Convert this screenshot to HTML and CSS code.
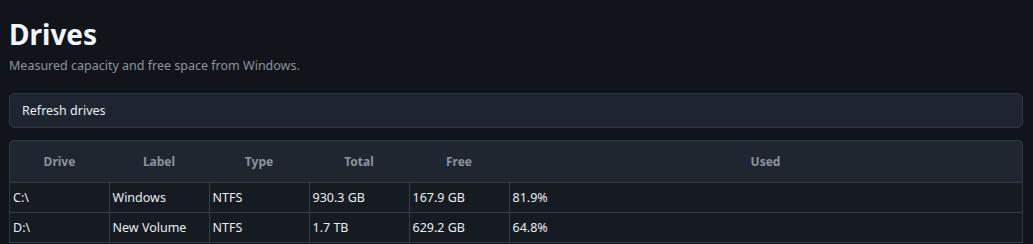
FILE: index.html
```html
<!DOCTYPE html>
<html lang="en">
  <head>
    <meta charset="UTF-8" />
    <meta name="viewport" content="width=device-width, initial-scale=1.0" />
    <title>Drives</title>
    <link rel="stylesheet" href="styles.css">
  </head>

  <body>
    <main>
      <h1>Drives</h1>
      <p class="subtitle">Measured capacity and free space from Windows.</p>

      <button class="refresh">Refresh drives</button>

      <div class="table-wrap">
        <table>
          <thead>
            <tr>
              <th class="col-small first">Drive</th>
              <th class="col-small">Label</th>
              <th class="col-small">Type</th>
              <th class="col-small">Total</th>
              <th class="col-small">Free</th>
              <th>Used</th>
            </tr>
          </thead>
          <tbody>
            <tr>
              <td>C:\</td>
              <td>Windows</td>
              <td>NTFS</td>
              <td>930.3 GB</td>
              <td>167.9 GB</td>
              <td>81.9%</td>
            </tr>
            <tr>
              <td>D:\</td>
              <td>New Volume</td>
              <td>NTFS</td>
              <td>1.7 TB</td>
              <td>629.2 GB</td>
              <td>64.8%</td>
            </tr>
          </tbody>
        </table>
      </div>
    </main>
  </body>
</html>
```

FILE: styles.css
```css
body {
  background-color: #11151b;
  color: #e6edf3;
  font-family: "Noto Sans", "Open Sans", sans-serif;
  margin: 0;
}

main {
  padding: 0 10px 0 9px;
}

h1 {
  font-size: 28px;
  font-weight: 700;
  margin: 0;
  padding-top: 15px;
  line-height: 38px;
  color: #f0f6fc;
}

.subtitle {
  font-size: 12.5px;
  color: #8b949e;
  margin: 4px 0 0;
  line-height: 18px;
}

.refresh {
  display: block;
  width: 100%;
  box-sizing: border-box;
  margin-top: 18px;
  height: 35px;
  padding: 0 12px;
  text-align: left;
  font-family: inherit;
  font-size: 12.5px;
  color: #e6edf3;
  background-color: #1e2530;
  border: 1px solid #2f3742;
  border-radius: 5px;
}

.table-wrap {
  margin-top: 12px;
  background-color: #1f2630;
  border: 1px solid #2f3742;
  border-bottom: none;
  border-radius: 5px 5px 0 0;
  overflow: hidden;
}

table {
  width: 100%;
  border-collapse: collapse;
  font-size: 12.5px;
}

th {
  height: 41px;
  color: #8b949e;
  font-weight: 700;
  font-size: 12px;
  text-align: center;
  padding: 0;
  border-bottom: 1px solid #343c47;
}

th.col-small {
  width: 100px;
}

th.first {
  width: 99px;
}

td {
  height: 29px;
  padding: 0 3px;
  background-color: #161b22;
  border-right: 1px solid #343c47;
  border-bottom: 1px solid #343c47;
}

td:last-child {
  border-right: none;
}
```
